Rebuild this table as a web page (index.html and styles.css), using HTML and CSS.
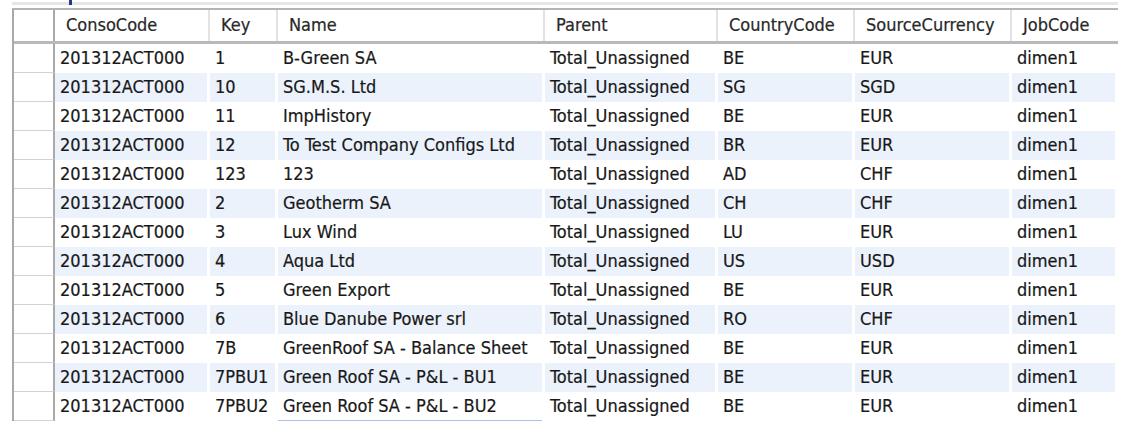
FILE: index.html
```html
<!DOCTYPE html>
<html>
<head>
<meta charset="utf-8">
<link rel="stylesheet" href="styles.css">
</head>
<body>
<div class="page">
  <div class="topline"><span class="tick"></span></div>
  <div class="grid">
    <div class="row head">
      <div class="gut"></div>
      <div class="c">ConsoCode</div>
      <div class="c">Key</div>
      <div class="c">Name</div>
      <div class="c">Parent</div>
      <div class="c">CountryCode</div>
      <div class="c">SourceCurrency</div>
      <div class="c">JobCode</div>
    </div>
    <div class="row"><div class="gut"></div><div class="c">201312ACT000</div><div class="c">1</div><div class="c">B-Green SA</div><div class="c">Total_Unassigned</div><div class="c">BE</div><div class="c">EUR</div><div class="c">dimen1</div></div>
    <div class="row alt"><div class="gut"></div><div class="c">201312ACT000</div><div class="c">10</div><div class="c">SG.M.S. Ltd</div><div class="c">Total_Unassigned</div><div class="c">SG</div><div class="c">SGD</div><div class="c">dimen1</div></div>
    <div class="row"><div class="gut"></div><div class="c">201312ACT000</div><div class="c">11</div><div class="c">ImpHistory</div><div class="c">Total_Unassigned</div><div class="c">BE</div><div class="c">EUR</div><div class="c">dimen1</div></div>
    <div class="row alt"><div class="gut"></div><div class="c">201312ACT000</div><div class="c">12</div><div class="c">To Test Company Configs Ltd</div><div class="c">Total_Unassigned</div><div class="c">BR</div><div class="c">EUR</div><div class="c">dimen1</div></div>
    <div class="row"><div class="gut"></div><div class="c">201312ACT000</div><div class="c">123</div><div class="c">123</div><div class="c">Total_Unassigned</div><div class="c">AD</div><div class="c">CHF</div><div class="c">dimen1</div></div>
    <div class="row alt"><div class="gut"></div><div class="c">201312ACT000</div><div class="c">2</div><div class="c">Geotherm SA</div><div class="c">Total_Unassigned</div><div class="c">CH</div><div class="c">CHF</div><div class="c">dimen1</div></div>
    <div class="row"><div class="gut"></div><div class="c">201312ACT000</div><div class="c">3</div><div class="c">Lux Wind</div><div class="c">Total_Unassigned</div><div class="c">LU</div><div class="c">EUR</div><div class="c">dimen1</div></div>
    <div class="row alt"><div class="gut"></div><div class="c">201312ACT000</div><div class="c">4</div><div class="c">Aqua Ltd</div><div class="c">Total_Unassigned</div><div class="c">US</div><div class="c">USD</div><div class="c">dimen1</div></div>
    <div class="row"><div class="gut"></div><div class="c">201312ACT000</div><div class="c">5</div><div class="c">Green Export</div><div class="c">Total_Unassigned</div><div class="c">BE</div><div class="c">EUR</div><div class="c">dimen1</div></div>
    <div class="row alt"><div class="gut"></div><div class="c">201312ACT000</div><div class="c">6</div><div class="c">Blue Danube Power srl</div><div class="c">Total_Unassigned</div><div class="c">RO</div><div class="c">CHF</div><div class="c">dimen1</div></div>
    <div class="row"><div class="gut"></div><div class="c">201312ACT000</div><div class="c">7B</div><div class="c">GreenRoof SA - Balance Sheet</div><div class="c">Total_Unassigned</div><div class="c">BE</div><div class="c">EUR</div><div class="c">dimen1</div></div>
    <div class="row alt"><div class="gut"></div><div class="c">201312ACT000</div><div class="c">7PBU1</div><div class="c">Green Roof SA - P&amp;L - BU1</div><div class="c">Total_Unassigned</div><div class="c">BE</div><div class="c">EUR</div><div class="c">dimen1</div></div>
    <div class="row last"><div class="gut"></div><div class="c">201312ACT000</div><div class="c">7PBU2</div><div class="c focus">Green Roof SA - P&amp;L - BU2</div><div class="c">Total_Unassigned</div><div class="c">BE</div><div class="c">EUR</div><div class="c">dimen1</div></div>
  </div>
</div>
</body>
</html>
```

FILE: styles.css
```css
html, body {
  margin: 0;
  padding: 0;
  background: #ffffff;
}

.page {
  width: 1141px;
  height: 432px;
  overflow: hidden;
  font-family: "DejaVu Sans Condensed", "DejaVu Sans", sans-serif;
  font-size: 18px;
  color: #181818;
  -webkit-text-stroke: 0.2px #181818;
}

.topline {
  position: relative;
  margin-left: 12px;
  width: 1106px;
  height: 3px;
  margin-top: 2px;
  margin-bottom: 3px;
  background: #e6e6e6;
}

.tick {
  position: absolute;
  left: 57px;
  top: -2px;
  width: 3px;
  height: 5px;
  background: #1f3a8a;
}

.grid {
  margin-left: 12px;
  width: 1106px;
  border-left: 2px solid #a9a9a9;
  border-top: 2px solid #b4b4b4;
  box-sizing: border-box;
}

.row {
  display: grid;
  grid-template-columns: 41px 155px 68px 267px 173px 137px 157px 106px;
  height: 29px;
}

.row .c {
  padding: 2px 0 0 5px;
  line-height: 24px;
  white-space: nowrap;
  overflow: hidden;
  border-right: 3px solid #ffffff;
}

.row.alt .c {
  background: #ebf2fc;
}

.gut {
  border-right: 2px solid #a9a9a9;
  border-bottom: 1px solid #d2d2d2;
  background: #ffffff;
}

.row.head {
  height: 31px;
  border-bottom: 3px solid #b9b9b9;
  color: #2a2a2a;
}

.row.head .gut {
  border-bottom: none;
}

.row.head .c {
  padding: 3px 0 0 11px;
  border-right: 2px solid #e2e2e2;
}

.row.head .c:last-child {
  border-right: none;
}

.row .focus {
  box-shadow: inset 0 -1px 0 #a9c4ea;
}
```
